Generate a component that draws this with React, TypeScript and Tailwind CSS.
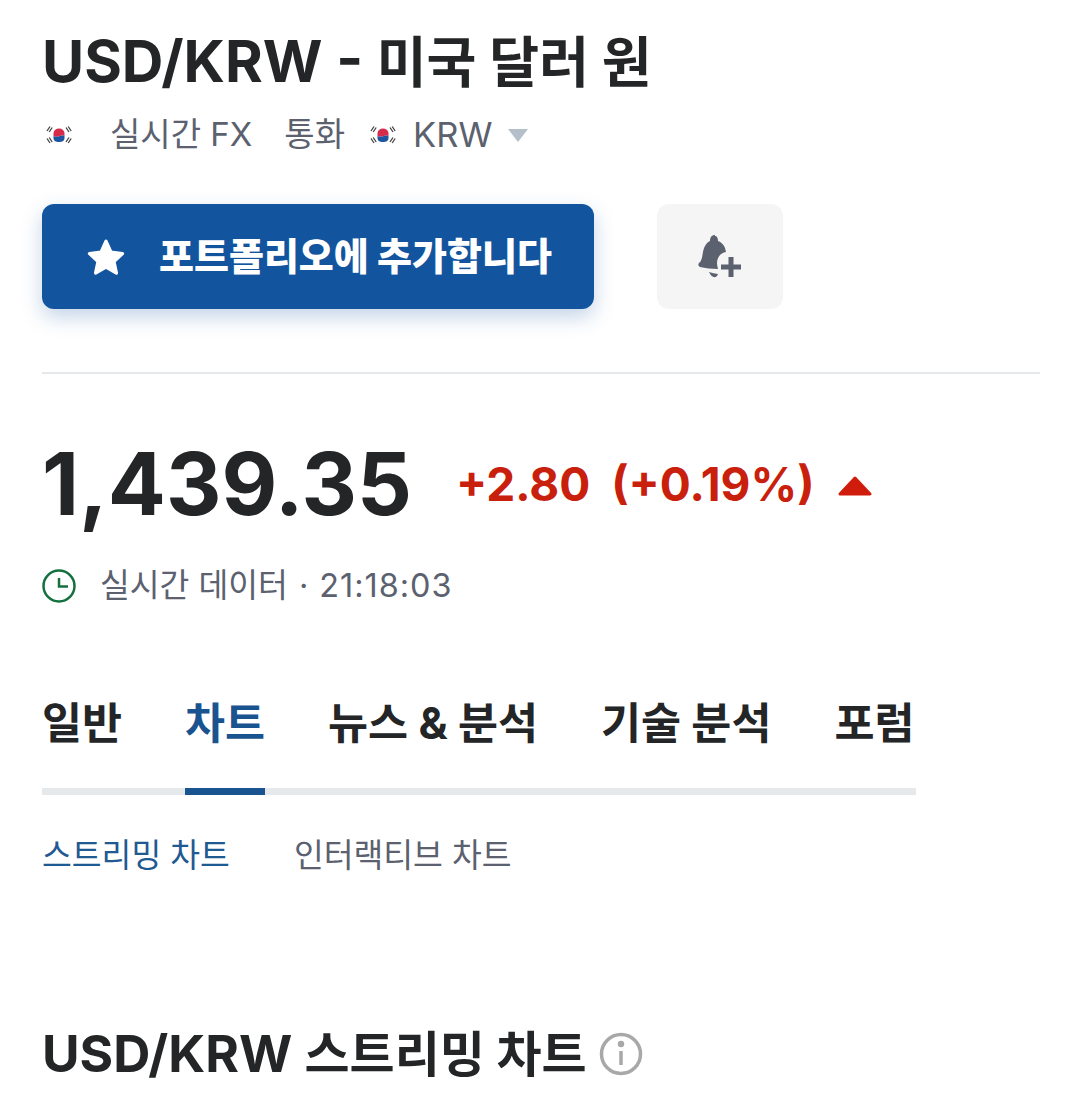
import React from 'react';

function KoreaFlag() {
  return (
    <svg width="28" height="28" viewBox="0 0 28 28" className="shrink-0">
      <path d="M8.500 12c.5-3 2.500-4.500 5.500-4.500s5 1.500 5.500 4.500v3c-2-1-3.500-.5-5.500 .3s-4 .7-5.500-.3z" fill="#d62b4a" />
      <path d="M8.500 15c1.500 1 3.500 1.100 5.500 .3s3.500-1.300 5.500-.3v2c0 3-2.500 4-5.500 4s-5.500-1-5.500-4z" fill="#1d55a0" />
      <g stroke="#444" strokeWidth="1.300" fill="none">
        <path d="M2 10l3-4.500M4.200 11l3-4.500" />
        <path d="M21 6.500l3 4.500M23.200 5.500l3 4.500" />
        <path d="M2 17.500l3 4.500M4.200 16.500l3 4.500" />
        <path d="M21 21l3-4.500M23.200 22l3-4.500" />
      </g>
    </svg>
  );
}

const tabs = ['일반', '차트', '뉴스 & 분석', '기술 분석', '포럼'];

export default function App() {
  return (
    <div className="w-[1080px] h-[1111px] overflow-hidden bg-white pl-[42px] pr-[40px] pt-[25px] text-[#232526] font-['Inter','Noto_Sans_CJK_KR',sans-serif]">
      <h1 className="text-[57.6px] leading-[72px] font-bold whitespace-nowrap">
        USD/KRW - <span className="text-[54.2px]">미국 달러 원</span>
      </h1>

      <div className="mt-[17px] flex items-center h-[40px] text-[33px] text-[#5b616e] whitespace-nowrap">
        <span className="ml-[3px]"><KoreaFlag /></span>
        <span className="ml-[37px]">실시간 FX</span>
        <span className="ml-[32px]">통화</span>
        <span className="ml-[24px]"><KoreaFlag /></span>
        <span className="ml-[16px] text-[34.5px]">KRW</span>
        <svg width="20" height="14" viewBox="0 0 20 14" className="ml-[16px]">
          <path d="M0 1h20l-10 13z" fill="#b5bfca" />
        </svg>
      </div>

      <div className="mt-[49px] flex">
        <button className="w-[552px] h-[105px] rounded-[12px] bg-[#13549e] shadow-[0_8px_20px_rgba(19,84,158,0.25)] flex items-center pl-[44px] text-white text-[38px] font-extrabold">
          <svg width="40" height="38" viewBox="0 0 24 23" fill="white" stroke="white" strokeWidth="2" strokeLinejoin="round">
            <path d="M12 2l3 6.600 7 .8-5.200 4.800 1.500 7L12 17.600 5.700 21.200l1.500-7L2 9.400l7-.8z" />
          </svg>
          <span className="ml-[33px]">포트폴리오에 추가합니다</span>
        </button>
        <button className="ml-[63px] w-[126px] h-[105px] rounded-[12px] bg-[#f5f5f6] flex items-center justify-center">
          <svg width="46" height="44" viewBox="0 0 46 44">
            <path d="M18 1c2 0 3 2 3 5 3 1 6 4 7 7l1 4c-6 1-9 6-9 11 0 2 .5 4 1 6-6 0-13-1-18-2-2-1-2-3-1-4 3-2 3-6 4-11 1-5 3-9 7-11 0-4 2-6 5-6z" fill="#5b616e" />
            <path d="M12 37c3 1 6 1.500 9 2-1 4-6 5-9-2z" fill="#5b616e" />
            <path d="M34 22v20M24 32h20" stroke="#5b616e" strokeWidth="5" />
          </svg>
        </button>
      </div>

      <div className="mt-[63px] border-t-2 border-[#e6e9eb]" />

      <div className="mt-[55px] flex items-center whitespace-nowrap">
        <span className="text-[86px] leading-[110px] font-bold">1,439.35</span>
        <span className="ml-[44px] text-[46px] font-bold text-[#c9200d]">+2.80</span>
        <span className="ml-[21px] text-[46px] font-bold text-[#c9200d]">(+0.19%)</span>
        <svg width="34" height="22" viewBox="0 0 34 22" className="ml-[23px] mt-[3px]">
          <path d="M17 3L32 19H2z" fill="#d01c0c" stroke="#d01c0c" strokeWidth="3" strokeLinejoin="round" />
        </svg>
      </div>

      <div className="mt-[23px] flex items-center text-[32.4px] text-[#5b616e] whitespace-nowrap">
        <svg width="34" height="34" viewBox="0 0 34 34" fill="none" stroke="#14703e" strokeWidth="2.500">
          <circle cx="17" cy="17" r="15.500" />
          <path d="M17 9v8.500h9" />
        </svg>
        <span className="ml-[24px]">실시간 데이터</span>
        <span className="ml-[11px]">·</span>
        <span className="ml-[11px] tracking-[1px]">21:18:03</span>
      </div>

      <div className="mt-[75px] w-[874px] border-b-[7px] border-[#e6e9eb] flex whitespace-nowrap text-[43.5px] font-bold h-[109px]">
        {tabs.map((t, i) => (
          <div
            key={t}
            className={
              i === 1
                ? 'mr-[63px] h-[109px] leading-[74px] border-b-[7px] border-[#1a5490] text-[#1a5490]'
                : 'mr-[63px] last:mr-0 leading-[74px]'
            }
          >
            {t}
          </div>
        ))}
      </div>

      <div className="mt-[37px] flex text-[32.4px] leading-[48px] whitespace-nowrap">
        <span className="text-[#1f5a92]">스트리밍 차트</span>
        <span className="ml-[64px] text-[#5b616e]">인터랙티브 차트</span>
      </div>

      <div className="mt-[143px] flex items-center whitespace-nowrap">
        <span className="text-[51.4px] leading-[60px] font-bold">
          USD/KRW <span className="text-[49px]">스트리밍 차트</span>
        </span>
        <svg width="44" height="44" viewBox="0 0 44 44" className="ml-[12px]" fill="none" stroke="#a8a8a8" strokeWidth="3.500">
          <circle cx="22" cy="22" r="19.500" />
          <path d="M22 19v14" />
          <circle cx="22" cy="12" r="1.500" fill="#a8a8a8" />
        </svg>
      </div>
    </div>
  );
}
